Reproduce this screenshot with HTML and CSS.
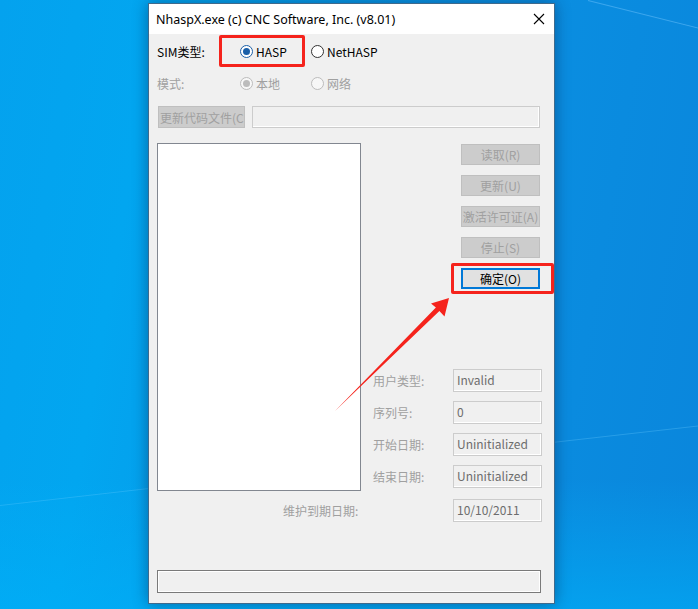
FILE: index.html
```html
<!DOCTYPE html>
<html lang="zh-CN">
  <head>
    <meta charset="UTF-8" />
    <title>NhaspX</title>
    <link rel="stylesheet" href="styles.css">
  </head>
  <body>
    <div class="desktop">
      <div class="streak streak-top"></div>
      <div class="streak streak-bottom"></div>

      <div class="window">
        <div class="titlebar">
          <span class="title">NhaspX.exe (c) CNC Software, Inc. (v8.01)</span>
          <svg class="close" width="12" height="12" viewBox="0 0 12 12">
            <path d="M1 1 L11 11 M11 1 L1 11" stroke="#000" stroke-width="1.1" fill="none" />
          </svg>
        </div>

        <div class="dialog">
          <div class="row row-radio">
            <span class="row-label">SIM类型:</span>
            <div class="radio"><span class="dot checked"></span>HASP</div>
            <div class="radio"><span class="dot"></span>NetHASP</div>
          </div>

          <div class="row row-radio disabled">
            <span class="row-label">模式:</span>
            <div class="radio"><span class="dot checked"></span>本地</div>
            <div class="radio"><span class="dot"></span>网络</div>
          </div>

          <div class="row row-file">
            <div class="btn btn-file">更新代码文件(C)...</div>
            <div class="field field-path"></div>
          </div>

          <div class="main">
            <div class="listbox"></div>
            <div class="side">
              <div class="buttons">
                <div class="btn">读取(R)</div>
                <div class="btn">更新(U)</div>
                <div class="btn">激活许可证(A)</div>
                <div class="btn">停止(S)</div>
                <div class="btn btn-default">确定(O)</div>
              </div>
              <div class="info">
                <div class="info-row">
                  <span class="info-label">用户类型:</span>
                  <div class="field">Invalid</div>
                </div>
                <div class="info-row">
                  <span class="info-label">序列号:</span>
                  <div class="field">0</div>
                </div>
                <div class="info-row">
                  <span class="info-label">开始日期:</span>
                  <div class="field">Uninitialized</div>
                </div>
                <div class="info-row">
                  <span class="info-label">结束日期:</span>
                  <div class="field">Uninitialized</div>
                </div>
              </div>
            </div>
          </div>

          <div class="row row-expire">
            <span class="info-label">维护到期日期:</span>
            <div class="field">10/10/2011</div>
          </div>

          <div class="status"></div>
        </div>
      </div>

      <!-- annotations drawn over the screenshot -->
      <div class="mark mark-radio"></div>
      <div class="mark mark-ok"></div>
      <svg class="arrow" width="698" height="609" viewBox="0 0 698 609">
        <polygon points="334.5,411.5 439.4,311 444.5,316.5 449,298 431,303.5 435.9,307.4 335.5,410.5" fill="#f5231c" />
      </svg>
    </div>
  </body>
</html>
```

FILE: styles.css
```css
* {
  margin: 0;
  padding: 0;
  box-sizing: border-box;
}

body {
  width: 698px;
  height: 609px;
  overflow: hidden;
  font-family: "Noto Sans CJK SC", "Noto Sans", sans-serif;
  font-size: 12px;
  color: #000;
}

.desktop {
  position: relative;
  width: 698px;
  height: 609px;
  background: linear-gradient(100deg, #04a2ee 0%, #02a6f0 20%, #0a90e2 60%, #0a86dc 100%);
  overflow: hidden;
}

/* faint light streaks of the wallpaper */
.streak {
  position: absolute;
  height: 1px;
  transform-origin: left center;
}

.streak-top {
  left: 588px;
  top: 0;
  width: 160px;
  transform: rotate(14deg);
  background: rgba(120, 200, 255, 0.45);
}

.streak-bottom {
  left: 0;
  top: 505px;
  width: 720px;
  transform: rotate(-6.5deg);
  background: rgba(110, 205, 255, 0.3);
}

.desktop::after {
  content: "";
  position: absolute;
  left: 0;
  right: 0;
  bottom: 0;
  height: 130px;
  background: linear-gradient(180deg, rgba(0, 180, 250, 0) 0%, rgba(0, 176, 248, 0.6) 100%);
}

.window {
  position: absolute;
  left: 148px;
  top: 3px;
  width: 407px;
  height: 601px;
  border: 1px solid #3f6a8c;
  background: #f0f0f0;
  box-shadow: 0 0 14px rgba(0, 30, 70, 0.45);
  z-index: 1;
}

.titlebar {
  height: 30px;
  background: #fff;
  display: flex;
  align-items: center;
  padding-left: 7px;
  padding-right: 9px;
}

.title {
  flex: 1;
  font-family: "Noto Sans", sans-serif;
  font-size: 12.5px;
  color: #000;
}

.close {
  display: block;
}

.dialog {
  padding: 0 12px 0 8px;
}

.row {
  display: flex;
  align-items: center;
}

.row-radio {
  height: 32px;
}

.row-radio:first-child {
  margin-top: 1px;
}

.row-label {
  width: 83px;
}

.radio {
  display: flex;
  align-items: center;
  width: 71px;
}

.dot {
  width: 13px;
  height: 13px;
  border-radius: 50%;
  border: 1px solid #333;
  background: #fff;
  margin-right: 3px;
  display: flex;
  align-items: center;
  justify-content: center;
}

.dot.checked {
  border-color: #1a5fa8;
}

.dot.checked::after {
  content: "";
  width: 7px;
  height: 7px;
  border-radius: 50%;
  background: #1a5fa8;
}

.disabled {
  color: #a0a0a0;
}

.disabled .dot {
  border-color: #bcbcbc;
  background: #f7f7f7;
}

.disabled .dot.checked::after {
  background: #bcbcbc;
}

.row-file {
  margin-top: 7px;
  height: 22px;
  gap: 7px;
}

.btn {
  height: 21px;
  background: #cccccc;
  border: 1px solid #bfbfbf;
  color: #a0a0a0;
  display: flex;
  align-items: center;
  justify-content: center;
  white-space: nowrap;
  overflow: hidden;
}

.btn-file {
  margin-left: 1px;
  width: 87px;
  height: 22px;
  justify-content: flex-start;
  padding-left: 1px;
}

.field {
  width: 89px;
  height: 23px;
  border: 1px solid #cccccc;
  box-shadow: inset -1px -1px 0 #fff;
  color: #6d6d6d;
  padding: 1px 0 0 3px;
  white-space: nowrap;
}

.field-path {
  width: 288px;
  height: 22px;
}

.main {
  margin-top: 15px;
  display: flex;
  height: 348px;
}

.listbox {
  width: 204px;
  height: 348px;
  background: #fff;
  border: 1px solid #828790;
}

.side {
  width: 181px;
  display: flex;
  flex-direction: column;
  justify-content: space-between;
  padding-bottom: 3px;
}

.buttons {
  display: flex;
  flex-direction: column;
  align-items: flex-end;
  gap: 10px;
  margin-top: 1px;
  padding-right: 2px;
}

.buttons .btn {
  width: 79px;
}

.buttons .btn-default {
  background: #e1e1e1;
  border: 2px solid #0078d7;
  color: #000;
}

.info {
  display: flex;
  flex-direction: column;
  gap: 9px;
}

.info-row {
  display: flex;
  align-items: center;
  justify-content: space-between;
  padding-left: 12px;
}

.info-label {
  color: #a0a0a0;
}

.row-expire {
  margin-top: 8px;
  height: 23px;
  justify-content: space-between;
  padding-left: 126px;
}

.status {
  margin-top: 48px;
  width: 384px;
  height: 23px;
  border: 1px solid #7a7a7a;
  box-shadow: inset 1px 1px 0 #fff, inset -1px -1px 0 #fff;
}

/* red annotation boxes */
.mark {
  position: absolute;
  border: 3px solid #f5231c;
  border-radius: 2px;
  z-index: 2;
}

.mark-radio {
  left: 219px;
  top: 35px;
  width: 86px;
  height: 32px;
}

.mark-ok {
  left: 451px;
  top: 263px;
  width: 103px;
  height: 31px;
}

.arrow {
  position: absolute;
  left: 0;
  top: 0;
  z-index: 2;
}
```
